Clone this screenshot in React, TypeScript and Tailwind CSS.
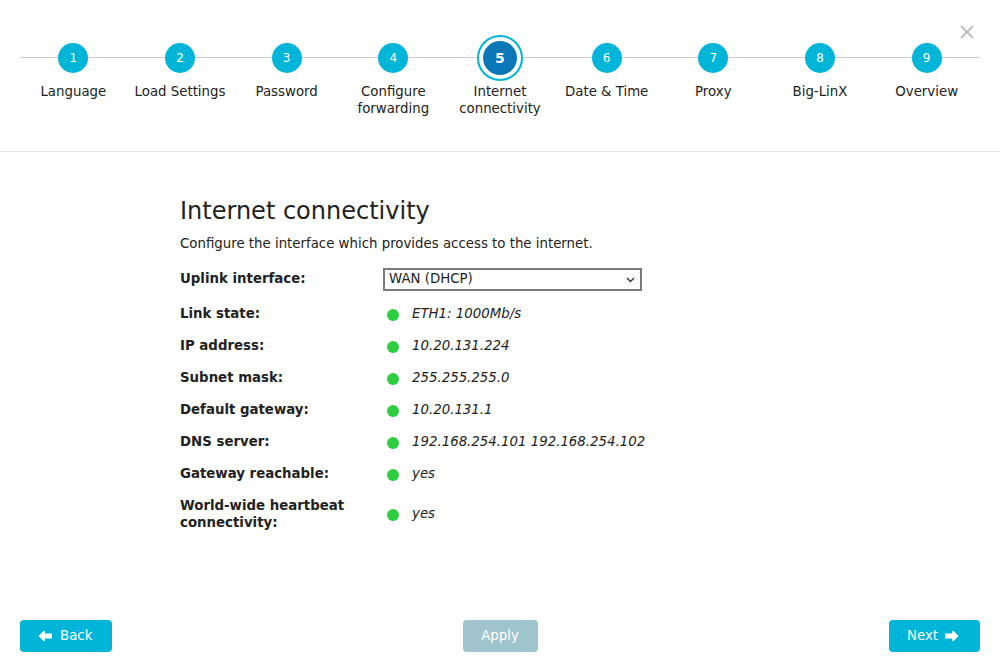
import React from "react";

const steps = [
    "Language",
    "Load Settings",
    "Password",
    "Configure forwarding",
    "Internet connectivity",
    "Date & Time",
    "Proxy",
    "Big-LinX",
    "Overview",
];

const ACTIVE = 5;

const rows: { label: string; value: string }[] = [
    { label: "Link state:", value: "ETH1: 1000Mb/s" },
    { label: "IP address:", value: "10.20.131.224" },
    { label: "Subnet mask:", value: "255.255.255.0" },
    { label: "Default gateway:", value: "10.20.131.1" },
    { label: "DNS server:", value: "192.168.254.101 192.168.254.102" },
    { label: "Gateway reachable:", value: "yes" },
];

function ArrowLeft() {
    return (
        <svg width="14" height="12" viewBox="0 0 14 12" className="fill-white">
            <path d="M0.5 6 L6 0.6 L6.8 1.4 L6.8 3.6 L13.2 3.6 Q14 3.6 14 4.4 L14 7.6 Q14 8.4 13.2 8.4 L6.8 8.4 L6.8 10.6 L6 11.4 Z" />
        </svg>
    );
}

function ArrowRight() {
    return (
        <svg width="14" height="12" viewBox="0 0 14 12" className="fill-white">
            <path d="M13.5 6 L8 0.6 L7.2 1.4 L7.2 3.6 L0.8 3.6 Q0 3.6 0 4.4 L0 7.6 Q0 8.4 0.8 8.4 L7.2 8.4 L7.2 10.6 L8 11.4 Z" />
        </svg>
    );
}

function Step({ n, label }: { n: number; label: string }) {
    const active = n === ACTIVE;
    return (
        <div className="flex flex-col items-center">
            <div className="h-[46px] flex items-center justify-center">
                {active ? (
                    <div className="w-[46px] h-[46px] rounded-full border-2 border-[#00b5d8] bg-white flex items-center justify-center">
                        <div className="w-[34px] h-[34px] rounded-full bg-[#0a78b6] text-white text-[14px] font-bold flex items-center justify-center">
                            {n}
                        </div>
                    </div>
                ) : (
                    <div className="w-[30px] h-[30px] rounded-full bg-[#00b5d8] text-white text-[12px] flex items-center justify-center">
                        {n}
                    </div>
                )}
            </div>
            <div className="mt-[2px] text-[13.33px] leading-[17px] text-[#222] text-center w-[100px]">{label}</div>
        </div>
    );
}

export default function App() {
    return (
        <div className="w-full h-[672px] flex flex-col bg-white text-[#222]" style={{ fontFamily: '"DejaVu Sans", sans-serif' }}>
            {/* wizard steps */}
            <div className="relative h-[152px] border-b border-[#e6e6e6] shrink-0">
                <button className="absolute right-[26px] top-[25px] text-[#c4c4c4]">
                    <svg width="14" height="14" viewBox="0 0 14 14" className="stroke-current" strokeWidth="2.4">
                        <line x1="1" y1="1" x2="13" y2="13" />
                        <line x1="13" y1="1" x2="1" y2="13" />
                    </svg>
                </button>
                <div className="relative mx-5 mt-[35px]">
                    <div className="absolute left-0 right-0 top-[22px] h-px bg-[#cccccc]" />
                    <div className="relative grid grid-cols-9">
                        {steps.map((s, i) => (
                            <Step key={s} n={i + 1} label={s} />
                        ))}
                    </div>
                </div>
            </div>

            {/* content */}
            <div className="pl-[180px] pt-[45px]">
                <h1 className="text-[24px] leading-[28px] font-normal">Internet connectivity</h1>
                <p className="mt-[9px] text-[13.33px] leading-[20px]">Configure the interface which provides access to the internet.</p>

                <div className="mt-[9px] text-[13.33px]">
                    <div className="flex items-center h-[32px]">
                        <div className="w-[203px] font-bold">Uplink interface:</div>
                        <div className="relative w-[259px] h-[23px] border-2 border-[#7a7a7a] bg-white flex items-center pl-[4px]">
                            <span className="leading-none">WAN (DHCP)</span>
                            <svg width="9" height="6" viewBox="0 0 9 6" className="absolute right-[5px] top-[7px] stroke-[#333]" fill="none" strokeWidth="1.4">
                                <path d="M1 1 L4.5 4.5 L8 1" />
                            </svg>
                        </div>
                    </div>
                    <div className="mt-[3px]">
                        {rows.map((r) => (
                            <div key={r.label} className="flex items-center h-[32px]">
                                <div className="w-[203px] font-bold">{r.label}</div>
                                <span className="ml-1 w-3 h-3 rounded-full bg-[#2ecc40] shrink-0 mt-[2px]" />
                                <span className="ml-[13px] italic">{r.value}</span>
                            </div>
                        ))}
                        <div className="flex items-center py-[7px]">
                            <div className="w-[203px] font-bold leading-[17px]">
                                World-wide heartbeat
                                <br />
                                connectivity:
                            </div>
                            <span className="ml-1 w-3 h-3 rounded-full bg-[#2ecc40] shrink-0 mt-[2px]" />
                            <span className="ml-[13px] italic">yes</span>
                        </div>
                    </div>
                </div>
            </div>

            {/* footer */}
            <div className="mt-auto flex items-center justify-between px-5 pb-5">
                <button className="h-8 w-[92px] rounded bg-[#00b5d8] text-white text-[13.33px] flex items-center pl-[18px] gap-2">
                    <ArrowLeft />
                    <span>Back</span>
                </button>
                <button className="h-8 w-[75px] rounded bg-[#a0c4cc] text-white text-[13.33px] flex items-center justify-center ml-[-1px]">
                    Apply
                </button>
                <button className="h-8 w-[91px] rounded bg-[#00b5d8] text-white text-[13.33px] flex items-center pl-[18px] gap-[7px]">
                    <span>Next</span>
                    <ArrowRight />
                </button>
            </div>
        </div>
    );
}
